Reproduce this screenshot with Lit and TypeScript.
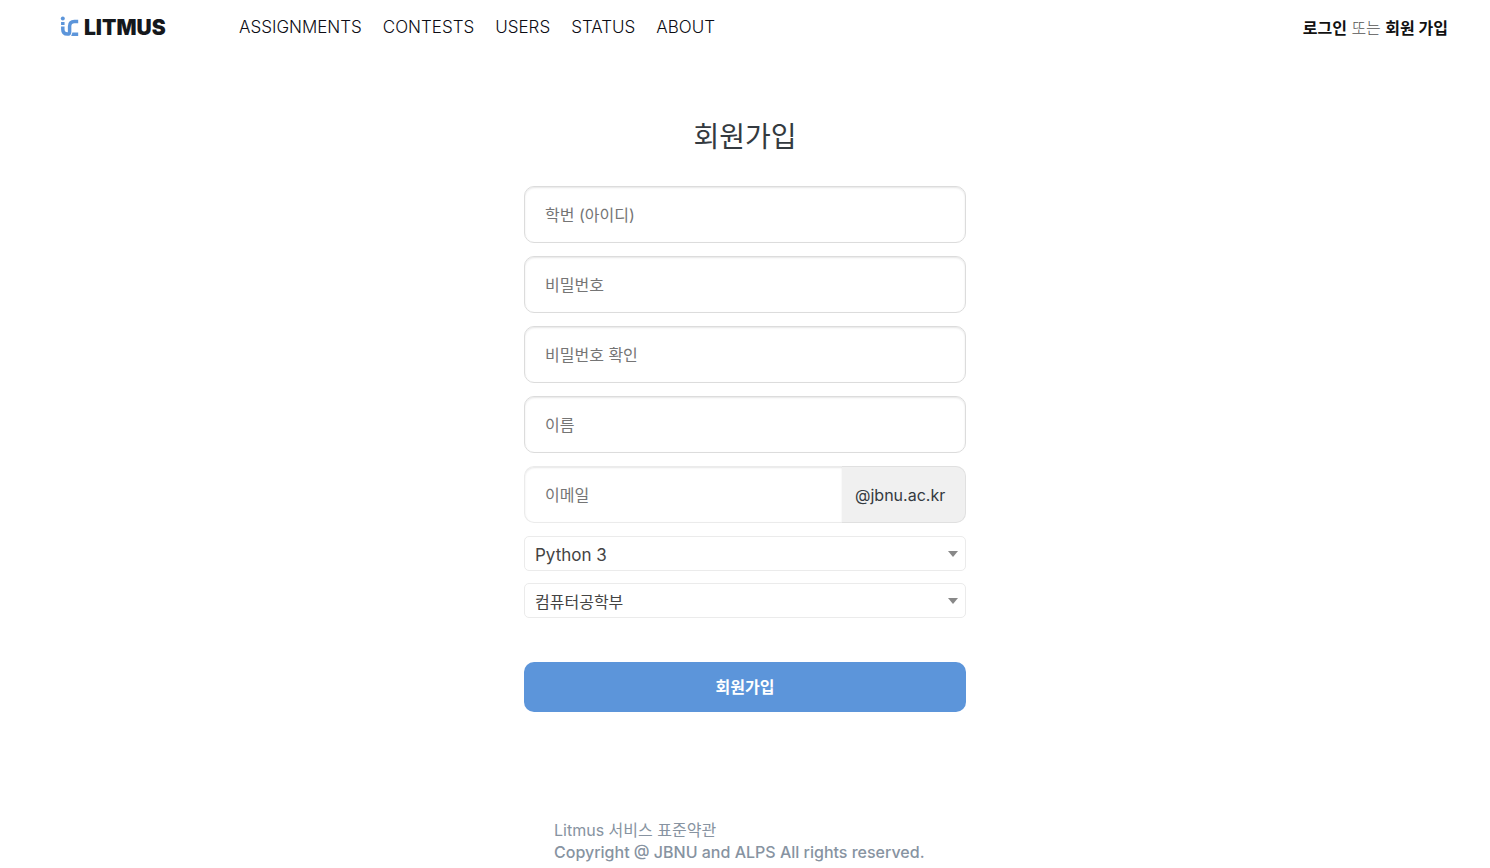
import { LitElement, html, css } from "lit";
import { customElement, state } from "lit/decorators.js";

const NAV = ["ASSIGNMENTS", "CONTESTS", "USERS", "STATUS", "ABOUT"];

const FIELDS = [
  { id: "username", label: "학번 (아이디)", type: "text" },
  { id: "password", label: "비밀번호", type: "password" },
  { id: "password2", label: "비밀번호 확인", type: "password" },
  { id: "fullname", label: "이름", type: "text" },
];

const LANGUAGES = ["Python 3", "C", "C++17", "Java 8"];
const DEPARTMENTS = ["컴퓨터공학부", "소프트웨어공학과", "전자공학부"];

@customElement("app-root")
export class AppRoot extends LitElement {
  @state() private language = LANGUAGES[0];
  @state() private department = DEPARTMENTS[0];

  static styles = css`
    :host {
      display: block;
      min-height: 100vh;
      background: #fff;
      color: #343a40;
      font-family: Inter, "Noto Sans CJK KR", sans-serif;
      font-size: 16px;
      line-height: 22px;
    }
    *, *::before { box-sizing: border-box; }
    a { color: inherit; text-decoration: none; }
    .header {
      display: flex;
      align-items: center;
      height: 54px;
      padding: 0 42px 0 60px;
    }
    .brand {
      display: flex;
      align-items: center;
      width: 179px;
      gap: 4px;
      color: #15181c;
      font-size: 21px;
      font-weight: 900;
    }
    .brand span, .account { padding-top: 2px; }
    .mark { display: block; width: 20px; height: 22px; }
    .nav {
      display: flex;
      flex: 1;
      gap: 21px;
      color: #0c0c14;
      font-size: 17px;
      font-weight: 300;
    }
    .account { color: #555; font-weight: 300; }
    .account a { color: #111; font-weight: 700; }
    .main {
      width: 442px;
      max-width: 100%;
      margin: 0 auto;
      padding-top: 61px;
    }
    .title {
      margin: 0 0 27px;
      font-size: 28px;
      line-height: 44px;
      font-weight: 400;
      text-align: center;
    }
    .form { display: flex; flex-direction: column; }
    .input {
      display: block;
      width: 100%;
      height: 57px;
      margin: 0 0 13px;
      padding: 0 20px;
      border: 1px solid #dcdcdc;
      border-radius: 10px;
      background: #fff;
      box-shadow: inset 0 1px 2px rgba(0, 0, 0, 0.1);
      color: #343a40;
      font: inherit;
    }
    .input::placeholder { color: #757575; opacity: 1; }
    .email { display: flex; margin-bottom: 13px; }
    .email .input {
      flex: 1;
      min-width: 0;
      margin: 0;
      border-color: #ebebeb;
      border-right: 0;
      border-radius: 10px 0 0 10px;
    }
    .domain {
      display: flex;
      align-items: center;
      width: 124px;
      padding-left: 13px;
      border: 1px solid #e0e0e0;
      border-left: 0;
      border-radius: 0 10px 10px 0;
      background: #f0f0f0;
    }
    .select-box { display: grid; align-items: center; margin-bottom: 12px; }
    .select, .arrow { grid-area: 1 / 1; }
    .select {
      appearance: none;
      width: 100%;
      height: 35px;
      padding: 2px 30px 0 10px;
      border: 1px solid #ebebeb;
      border-radius: 5px;
      background: #fff;
      color: #444;
      font: inherit;
    }
    .select.latin { font-size: 17px; }
    .arrow {
      justify-self: end;
      margin-right: 8px;
      border: 5px solid transparent;
      border-top: 6px solid #888;
      border-bottom: 0;
      pointer-events: none;
    }
    .submit {
      height: 50px;
      margin-top: 32px;
      border: 0;
      border-radius: 10px;
      background: #5c95da;
      color: #fff;
      font: inherit;
      font-weight: 700;
      cursor: pointer;
    }
    .footer {
      padding: 107px 0 5px 30px;
      color: #8793a1;
      white-space: nowrap;
    }
    .footer p { margin: 0; }
    .copyright { font-weight: 500; }
  `;

  render() {
    return html`
      <header class="header">
        <a class="brand" href="#">
          <svg class="mark" viewBox="0 0 20 22" fill="none" stroke="#5c95da" stroke-width="3.5" aria-hidden="true">
            <circle cx="2.8" cy="2.4" r="2" fill="#5c95da" stroke="none" />
            <path d="M2.8 6v3" />
            <path d="M2.8 10.5v2.8q0 4.8 4.6 4.8q2.2 0 2.2-2.2v-5.6q0-4.8 4.8-4.8h3.8" />
            <path d="M11.2 20l1.2-3.5h5.8V20z" fill="#5c95da" stroke="none" />
          </svg>
          <span>LITMUS</span>
        </a>
        <nav class="nav">${NAV.map((n) => html`<a href="#${n.toLowerCase()}">${n}</a>`)}</nav>
        <div class="account"><a href="#login">로그인</a> 또는 <a href="#register">회원 가입</a></div>
      </header>
      <main class="main">
        <h1 class="title">회원가입</h1>
        <form class="form" @submit=${(e: Event) => e.preventDefault()}>
          ${FIELDS.map(
            (f) => html`<input class="input" id=${f.id} type=${f.type} placeholder=${f.label} aria-label=${f.label} />`
          )}
          <div class="email">
            <input class="input" id="email" type="text" placeholder="이메일" aria-label="이메일" aria-describedby="domain" />
            <span class="domain" id="domain">@jbnu.ac.kr</span>
          </div>
          ${this.select("language", "언어", "select latin", LANGUAGES, this.language, (v) => (this.language = v))}
          ${this.select("department", "학과", "select", DEPARTMENTS, this.department, (v) => (this.department = v))}
          <button class="submit" type="submit">회원가입</button>
        </form>
        <footer class="footer">
          <p><a href="#terms">Litmus 서비스 표준약관</a></p>
          <p class="copyright">Copyright @ JBNU and ALPS All rights reserved.</p>
        </footer>
      </main>
    `;
  }

  private select(
    id: string,
    label: string,
    classes: string,
    options: string[],
    value: string,
    set: (v: string) => void
  ) {
    return html`
      <div class="select-box">
        <select class=${classes} id=${id} aria-label=${label} @change=${(e: Event) => set((e.target as HTMLSelectElement).value)}>
          ${options.map((o) => html`<option ?selected=${o === value}>${o}</option>`)}
        </select>
        <span class="arrow"></span>
      </div>
    `;
  }
}
